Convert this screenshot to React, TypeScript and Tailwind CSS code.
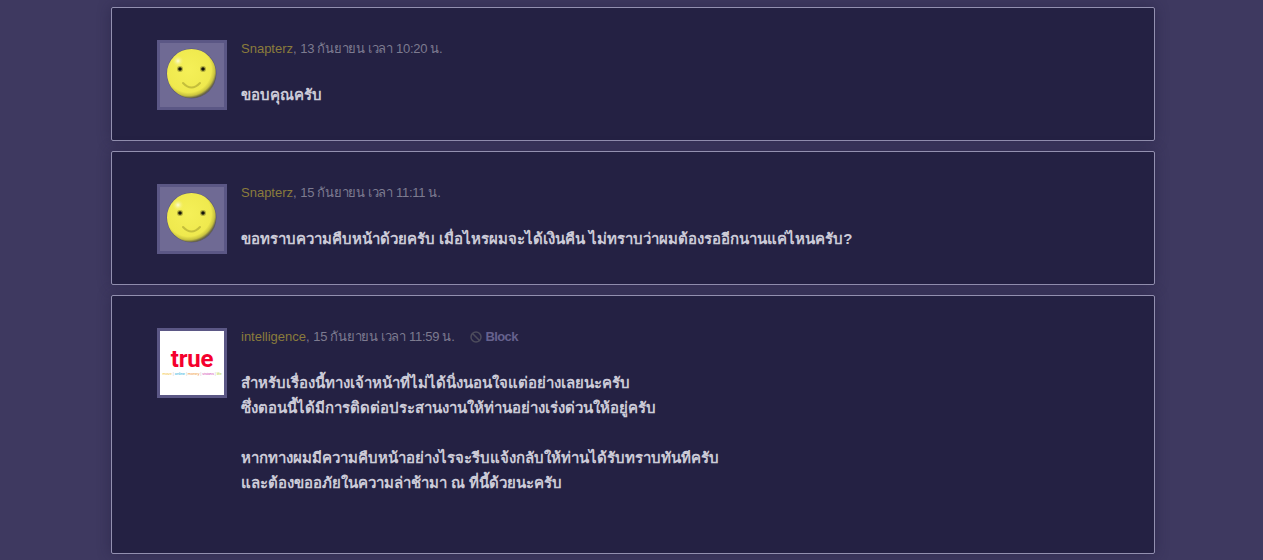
import React from "react";
import { Ban } from "lucide-react";

function Smiley({ id }: { id: string }) {
  return (
    <svg viewBox="0 0 64 64" className="block h-[64px] w-[64px]">
      <defs>
        <radialGradient id={`${id}f`} cx="44%" cy="42%" r="58%">
          <stop offset="0%" stopColor="#f5f058" />
          <stop offset="80%" stopColor="#efe94e" />
          <stop offset="92%" stopColor="#c9c33f" />
          <stop offset="100%" stopColor="#6a6646" />
        </radialGradient>
        <radialGradient id={`${id}h`}>
          <stop offset="0%" stopColor="#fdfcd8" />
          <stop offset="100%" stopColor="#f3ee58" stopOpacity="0" />
        </radialGradient>
      </defs>
      <rect width="64" height="64" fill="#6f6a94" />
      <circle cx="31.5" cy="30.5" r="25" fill="#59557a" />
      <circle cx="31.5" cy="30.5" r="24.5" fill={`url(#${id}f)`} />
      <circle cx="18" cy="18" r="6" fill={`url(#${id}h)`} />
      <circle cx="20" cy="26" r="3" fill="#b3ae3c" />
      <circle cx="43" cy="26" r="3" fill="#b3ae3c" />
      <circle cx="20" cy="26" r="1.8" fill="#14130c" />
      <circle cx="43" cy="26" r="1.8" fill="#14130c" />
      <path d="M23 40 Q31.5 49 40 40" fill="none" stroke="#c4be3c" strokeWidth="2" strokeLinecap="round" />
    </svg>
  );
}

function TrueLogo() {
  return (
    <div className="flex h-[64px] w-[64px] flex-col items-center bg-white pt-[16px]">
      <div className="text-[24px] font-bold leading-[24px] tracking-[-0.2px] text-[#f5002d] [font-family:Roboto,sans-serif]">true</div>
      <div className="flex gap-[1px] whitespace-nowrap text-[4px] leading-[5px] tracking-[-0.1px] [font-family:'Liberation_Sans',sans-serif]">
        <span className="text-[#f4c53c]">move</span>
        <span className="text-[#bbb]">|</span>
        <span className="text-[#1fb4dc]">online</span>
        <span className="text-[#bbb]">|</span>
        <span className="text-[#f09a3e]">money</span>
        <span className="text-[#bbb]">|</span>
        <span className="text-[#d24fb4]">visions</span>
        <span className="text-[#bbb]">|</span>
        <span className="text-[#b5d03a]">life</span>
      </div>
    </div>
  );
}

function Post({ name, date, avatar, block, lines }: { name: string; date: string; avatar: React.ReactNode; block?: boolean; lines: string[] }) {
  return (
    <div className="rounded-[2px] border border-[#9390b0] bg-[#242143] pb-[30px] pl-[45px] pr-[30px] pt-[32px] shadow-[0_0_14px_rgba(30,26,60,0.45)]">
      <div className="flex items-start gap-[14px]">
        <div className="shrink-0 border-[3px] border-[#5b5785]">{avatar}</div>
        <div className="min-w-0 flex-1 pb-[3px]">
          <div className="mt-[1px] flex h-[16px] items-center text-[13px] leading-[16px] text-[#7d7b90]">
            <span>
              <span className="text-[#8a7c3c]">{name}</span>, <span className="tracking-[-0.3px]">{date}</span>
            </span>
            {block && (
              <span className="ml-[16px] flex items-center gap-[3px] font-bold tracking-[-0.6px] text-[#66628e]">
                <Ban className="h-[12px] w-[12px] text-[#4d4c5c]" strokeWidth={3} />
                Block
              </span>
            )}
          </div>
          <div className="mt-[25px] text-[15px] font-bold leading-[25px] text-[#cccbd8]">
            {lines.map((l, i) => (
              <div key={i} className="h-[25px] whitespace-nowrap">{l}</div>
            ))}
          </div>
        </div>
      </div>
    </div>
  );
}

export default function App() {
  return (
    <div className="h-[560px] overflow-hidden bg-[#3e3960] [font-family:'Liberation_Sans','DejaVu_Sans',sans-serif]">
      <div className="ml-[111px] flex w-[1044px] flex-col gap-[10px] pt-[7px]">
        <Post name="Snapterz" date="13 กันยายน เวลา 10:20 น." avatar={<Smiley id="a" />} lines={["ขอบคุณครับ"]} />
        <Post name="Snapterz" date="15 กันยายน เวลา 11:11 น." avatar={<Smiley id="b" />} lines={["ขอทราบความคืบหน้าด้วยครับ เมื่อไหรผมจะได้เงินคืน ไม่ทราบว่าผมต้องรออีกนานแค่ไหนครับ?"]} />
        <Post
          name="intelligence"
          date="15 กันยายน เวลา 11:59 น."
          block
          avatar={<TrueLogo />}
          lines={[
            "สำหรับเรื่องนี้ทางเจ้าหน้าที่ไม่ได้นิ่งนอนใจแต่อย่างเลยนะครับ",
            "ซึ่งตอนนี้ได้มีการติดต่อประสานงานให้ท่านอย่างเร่งด่วนให้อยู่ครับ",
            "",
            "หากทางผมมีความคืบหน้าอย่างไรจะรีบแจ้งกลับให้ท่านได้รับทราบทันทีครับ",
            "และต้องขออภัยในความล่าช้ามา ณ ที่นี้ด้วยนะครับ",
            "",
          ]}
        />
      </div>
    </div>
  );
}
